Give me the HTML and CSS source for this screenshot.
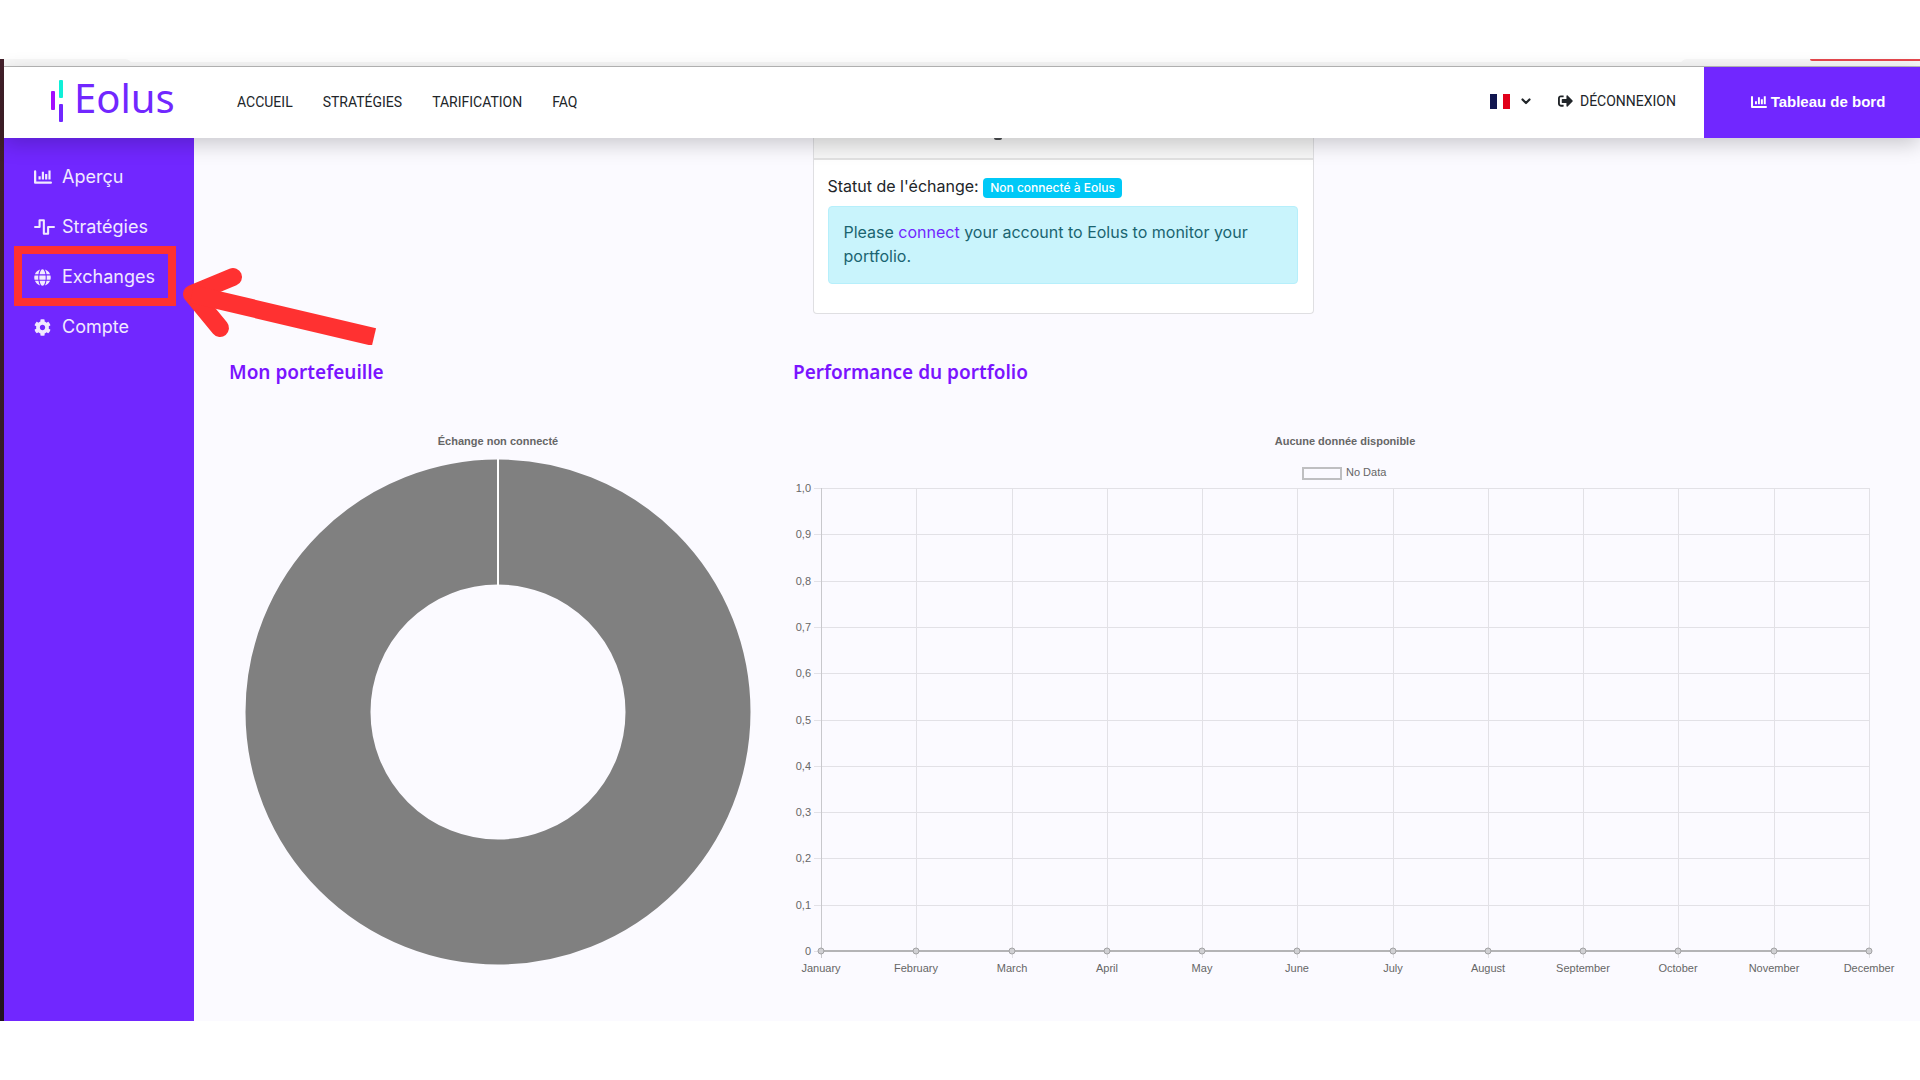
FILE: index.html
```html
<!DOCTYPE html>
<html lang="fr">
<head>
	<meta charset="utf-8">
	<meta name="viewport" content="width=device-width, initial-scale=1.0">
	<title>Eolus</title>
	<link rel="stylesheet" href="styles.css">
</head>
<body>
	<svg class="sprite" aria-hidden="true">
		<symbol id="i-chart" viewBox="0 0 512 384">
			<path d="M32 32v320h448" fill="none" stroke="currentColor" stroke-width="64" stroke-linecap="round" stroke-linejoin="round"/>
			<path d="M128 168h62v96h-62zM222 40h62v224h-62zM316 104h62v160h-62zM410 8h62v256h-62z"/>
		</symbol>
		<symbol id="i-wave" viewBox="0 0 640 480">
			<path d="M32 240h138V36h130v408h130V240h178" fill="none" stroke="currentColor" stroke-width="64" stroke-linecap="round" stroke-linejoin="round"/>
		</symbol>
		<symbol id="i-globe" viewBox="0 0 496 512">
			<path d="M336.5 160C322 70.7 287.8 8 248 8s-74 62.7-88.5 152h177zM152 256c0 22.2 1.2 43.5 3.3 64h185.3c2.1-20.5 3.3-41.8 3.3-64s-1.2-43.5-3.3-64H155.3c-2.1 20.5-3.3 41.8-3.3 64zm324.7-96c-28.6-67.9-86.5-120.4-158-141.6 24.4 33.8 41.2 84.7 50 141.6h108zM177.2 18.4C105.8 39.6 47.8 92.1 19.3 160h108c8.7-56.9 25.5-107.8 49.9-141.6zM487.4 192H372.7c2.1 21 3.3 42.5 3.3 64s-1.2 43-3.3 64h114.6c5.5-20.5 8.6-41.8 8.6-64s-3.1-43.5-8.5-64zM120 256c0-21.5 1.2-43 3.3-64H8.6C3.2 212.5 0 233.8 0 256s3.2 43.5 8.6 64h114.6c-2-21-3.2-42.5-3.2-64zm39.5 96c14.5 89.3 48.7 152 88.5 152s74-62.7 88.5-152h-177zm159.3 141.6c71.4-21.2 129.4-73.7 158-141.6h-108c-8.8 56.9-25.6 107.8-50 141.6zM19.3 352c28.6 67.9 86.5 120.4 158 141.6-24.4-33.8-41.2-84.7-50-141.6h-108z"/>
		</symbol>
		<symbol id="i-cog" viewBox="0 0 512 512">
			<path d="M487.4 315.7l-42.6-24.6c4.3-23.2 4.3-47 0-70.2l42.6-24.6c4.9-2.8 7.1-8.6 5.5-14-11.1-35.6-30-67.8-54.7-94.6-3.8-4.1-10-5.1-14.8-2.3L380.8 110c-17.9-15.4-38.5-27.3-60.8-35.1V25.8c0-5.6-3.9-10.5-9.4-11.7-36.7-8.2-74.3-7.8-109.2 0-5.5 1.2-9.4 6.1-9.4 11.7V75c-22.2 7.9-42.8 19.8-60.8 35.1L88.7 85.5c-4.9-2.8-11-1.9-14.8 2.3-24.7 26.7-43.6 58.9-54.7 94.6-1.7 5.4.6 11.2 5.5 14L67.3 221c-4.3 23.2-4.3 47 0 70.2l-42.6 24.6c-4.9 2.8-7.1 8.6-5.5 14 11.1 35.6 30 67.8 54.7 94.6 3.8 4.1 10 5.1 14.8 2.3l42.6-24.6c17.9 15.4 38.5 27.3 60.8 35.1v49.2c0 5.6 3.9 10.5 9.4 11.7 36.7 8.2 74.3 7.8 109.2 0 5.5-1.2 9.4-6.1 9.4-11.7v-49.2c22.2-7.9 42.8-19.8 60.8-35.1l42.6 24.6c4.9 2.8 11 1.9 14.8-2.3 24.7-26.7 43.6-58.9 54.7-94.6 1.5-5.5-.7-11.3-5.6-14.1zM256 336c-44.1 0-80-35.9-80-80s35.9-80 80-80 80 35.9 80 80-35.9 80-80 80z"/>
		</symbol>
		<symbol id="i-logout" viewBox="0 64 512 384">
			<path d="M497 273L329 441c-15 15-41 4.5-41-17v-96H152c-13.3 0-24-10.7-24-24v-96c0-13.3 10.7-24 24-24h136V88c0-21.4 25.9-32 41-17l168 168c9.3 9.4 9.3 24.6 0 34zM192 436v-40c0-6.6-5.4-12-12-12H96c-17.7 0-32-14.3-32-32V160c0-17.7 14.3-32 32-32h84c6.6 0 12-5.4 12-12V76c0-6.6-5.4-12-12-12H96c-53 0-96 43-96 96v192c0 53 43 96 96 96h84c6.6 0 12-5.4 12-12z"/>
		</symbol>
	</svg>

	<div class="window">
		<div class="tabs">
			<span class="tab-left"></span>
			<span class="tab-right"></span>
		</div>

		<header class="header">
			<a class="logo" href="#">
				<svg width="12" height="42" viewBox="0 0 12 42" aria-hidden="true">
					<rect x="0" y="11" width="4" height="19" rx="1" fill="#a30dff"/>
					<rect x="8" y="0" width="4" height="18" rx="1" fill="#0ff0d8"/>
					<rect x="8" y="24" width="4" height="18" rx="1" fill="#7127ff"/>
				</svg>
				<span>Eolus</span>
			</a>
			<nav class="nav">
				<a href="#">ACCUEIL</a>
				<a href="#">STRATÉGIES</a>
				<a href="#">TARIFICATION</a>
				<a href="#">FAQ</a>
			</nav>
			<button class="lang" type="button" aria-label="Français">
				<svg width="20" height="15" viewBox="0 0 20 15">
					<path fill="#fff" d="M0 0h20v15H0z"/>
					<path fill="#11164f" d="M0 0h7v15H0z"/>
					<path fill="#e1001a" d="M13 0h7v15h-7z"/>
				</svg>
				<svg width="10" height="7" viewBox="0 0 10 7">
					<path d="M1.5 1.5L5 5l3.5-3.5" fill="none" stroke="#212529" stroke-width="2.2" stroke-linecap="round" stroke-linejoin="round"/>
				</svg>
			</button>
			<a class="logout" href="#">
				<svg width="15" height="12"><use href="#i-logout"/></svg>
				<span>DÉCONNEXION</span>
			</a>
			<a class="dashboard" href="#">
				<svg width="16" height="12"><use href="#i-chart"/></svg>
				<span>Tableau de bord</span>
			</a>
		</header>

		<div class="page">
			<aside class="sidebar">
				<ul>
					<li><a href="#"><span class="icon"><svg width="18" height="14"><use href="#i-chart"/></svg></span>Aperçu</a></li>
					<li><a href="#"><span class="icon"><svg width="21" height="16"><use href="#i-wave"/></svg></span>Stratégies</a></li>
					<li class="current">
						<a href="#"><span class="icon"><svg width="17" height="17"><use href="#i-globe"/></svg></span>Exchanges</a>
						<svg class="arrow" width="200" height="84" viewBox="0 0 200 84" aria-hidden="true">
							<path d="M53 16L12 33l28 34" fill="none" stroke="#ff3131" stroke-width="18" stroke-linecap="round" stroke-linejoin="round"/>
							<path d="M12 33L194 76" fill="none" stroke="#ff3131" stroke-width="18"/>
						</svg>
					</li>
					<li><a href="#"><span class="icon"><svg width="17" height="17"><use href="#i-cog"/></svg></span>Compte</a></li>
				</ul>
			</aside>

			<main class="content">
				<section class="card">
					<div class="card-header"><span class="descender"></span></div>
					<div class="card-body">
						<p class="status">Statut de l'échange: <span class="badge">Non connecté à Eolus</span></p>
						<div class="alert">Please <a href="#">connect</a> your account to Eolus to monitor your portfolio.</div>
					</div>
				</section>

				<div class="row">
					<section class="portfolio">
						<h2>Mon portefeuille</h2>
						<svg class="chart" viewBox="0 0 540 560" role="img">
							<text class="chart-title" x="269" y="17">Échange non connecté</text>
							<circle cx="269" cy="284" r="190" fill="none" stroke="#808080" stroke-width="125"/>
							<path d="M269 31v127" stroke="#fff" stroke-width="2"/>
						</svg>
					</section>
					<section class="performance">
						<h2>Performance du portfolio</h2>
						<svg class="chart" viewBox="0 0 1104 560" role="img">
							<text class="chart-title" x="552" y="17">Aucune donnée disponible</text>
							<rect x="510" y="40" width="38" height="11" fill="none" stroke="#bfbfc1" stroke-width="2"/>
							<text class="label" x="553" y="48">No Data</text>
							<g id="plot"></g>
						</svg>
					</section>
				</div>
			</main>
		</div>
	</div>

	<script src="chart.js"></script>
</body>
</html>
```

FILE: styles.css
```css
body, ul, li, h2, p{
	margin: 0;
	padding: 0;
}
*, *::before, *::after{
	box-sizing: border-box;
}
ul{
	list-style: none;
}
a{
	color: inherit;
	text-decoration: none;
}
svg{
	display: block;
	fill: currentColor;
}
body{
	background: #fff;
	color: #212529;
	font: 16px/24px Inter, "Noto Sans", sans-serif;
	padding-top: 59px;
	overflow-x: hidden;
}
.sprite{
	position: absolute;
	width: 0;
	height: 0;
}
.window{
	position: relative;
	padding-left: 4px;
	background: linear-gradient(#43202a, #21131d);
}

/* bottom edge of the browser tabs */
.tabs{
	display: flex;
	justify-content: space-between;
	height: 8px;
	background: linear-gradient(#fff 3px, #f7f7f7 3px);
	border-bottom: 1px solid #b9b9b9;
	overflow: hidden;
}
.tab-left{
	width: 128px;
	background: #f7f7f7;
	border-top-right-radius: 8px;
}
.tab-right{
	width: 240px;
	padding-left: 130px;
	background: #f7f7f7;
	border-top-left-radius: 8px;
}
.tab-right::before{
	content: "";
	display: block;
	height: 2px;
	background: #e5484d;
	border-bottom-left-radius: 6px;
}

.header{
	position: relative;
	z-index: 3;
	display: flex;
	align-items: center;
	height: 71px;
	background: #fff;
	box-shadow: 0 6px 20px rgba(0, 0, 0, .2);
	font: 14px/24px Roboto, sans-serif;
}
.logo{
	display: flex;
	align-items: center;
	gap: 11px;
	width: 186px;
	padding-left: 47px;
	padding-bottom: 3px;
	color: #7127ff;
	font: 40px/48px "Noto Sans", sans-serif;
}
.logo svg{
	flex: none;
}
.logo span{
	padding-bottom: 6px;
}
.nav{
	display: flex;
	gap: 30px;
	margin-left: 47px;
	margin-right: auto;
	padding-bottom: 2px;
}
.lang{
	display: flex;
	align-items: center;
	gap: 11px;
	padding: 0 0 2px;
	border: 0;
	background: none;
	cursor: pointer;
}
.logout{
	display: flex;
	align-items: center;
	gap: 7px;
	margin: 0 28px 0 27px;
	padding-bottom: 3px;
}
.dashboard{
	display: flex;
	align-items: center;
	justify-content: center;
	gap: 4px;
	align-self: stretch;
	width: 216px;
	padding-left: 12px;
	padding-bottom: 2px;
	background: #7127ff;
	color: #fff;
	font: bold 15px/24px "Liberation Sans", Arial, sans-serif;
}

.page{
	display: flex;
	min-height: 883px;
}
.sidebar{
	position: relative;
	z-index: 2;
	flex: none;
	width: 190px;
	padding-top: 14px;
	background: #7127ff;
	color: #f1e9ff;
	font-size: 18px;
}
.sidebar li{
	position: relative;
}
.sidebar a{
	display: flex;
	align-items: center;
	height: 50px;
	padding-left: 30px;
}
.icon{
	flex: none;
	width: 28px;
}
.current::after{
	content: "";
	position: absolute;
	top: -6px;
	left: 10px;
	right: 18px;
	height: 60px;
	border: 8px solid #ff3131;
	pointer-events: none;
}
.arrow{
	position: absolute;
	top: 9px;
	left: 176px;
	pointer-events: none;
}

.content{
	flex: 1;
	min-width: 0;
	padding: 0 23px 32px 35px;
	background: #fbfaff;
}
.card{
	width: 501px;
	max-width: 100%;
	margin: 0 auto;
	background: #fff;
	border: 1px solid #dfdfe2;
	border-top: 0;
	border-radius: 0 0 4px 4px;
}
.card-header{
	height: 22px;
	padding-left: 180px;
	background: #f7f7f7;
	border-bottom: 2px solid #e2e2e2;
}
.descender{
	display: block;
	width: 8px;
	height: 2px;
	background: #4a4d50;
	border-radius: 0 0 4px 4px;
}
.card-body{
	padding: 14px 15px 29px 14px;
}
.status{
	padding-bottom: 8px;
}
.badge{
	display: inline-block;
	padding: 0 7px;
	border-radius: 4px;
	background: #00c9f7;
	color: #fff;
	font-size: 12px;
	font-weight: 500;
	line-height: 20px;
}
.alert{
	padding: 13px 15px;
	min-height: 78px;
	background: #c9f4fc;
	border: 1px solid #b6effb;
	border-radius: 4px;
	color: #1a6470;
}
.alert a{
	color: #7127ff;
}

.row{
	display: grid;
	grid-template-columns: 540fr 1104fr;
	gap: 24px;
	margin-top: 43px;
}
.row h2{
	margin-bottom: 41px;
	color: #7a14ff;
	font: 600 19px/30px "Noto Sans", sans-serif;
}
.chart{
	width: 100%;
	height: auto;
	overflow: visible;
	font-family: "Liberation Sans", Arial, sans-serif;
	font-size: 11px;
	fill: #666;
}
.chart-title{
	font-weight: bold;
	text-anchor: middle;
}
.month{
	text-anchor: middle;
}
.value{
	text-anchor: end;
}
```

FILE: chart.js
```js
var months = ["January", "February", "March", "April", "May", "June", "July", "August", "September", "October", "November", "December"];
var left = 28, right = 1076, top0 = 60, bottom = 523;
var html = "";
var i, x, y;

// horizontal lines and values
for(i=0; i<=10; i++){
	y = Math.round(top0 + (bottom - top0) * i / 10);
	var value = i == 10 ? "0" : ((10 - i) / 10).toFixed(1).replace(".", ",");
	html += '<path d="M' + (left - 7) + ' ' + (y + .5) + 'H' + right + '" stroke="#e2e1e6"/>';
	html += '<text class="value" x="18" y="' + (y + 4) + '">' + value + '</text>';
}

// vertical lines and months
for(i=0; i<months.length; i++){
	x = Math.round(left + (right - left) * i / 11);
	html += '<path d="M' + (x + .5) + ' ' + top0 + 'V' + (bottom + 7) + '" stroke="' + (i ? "#e2e1e6" : "#c8c8cc") + '"/>';
	html += '<text class="month" x="' + x + '" y="544">' + months[i] + '</text>';
}

// data line
html += '<path d="M' + left + ' ' + bottom + 'H' + right + '" stroke="#b4b4b6" stroke-width="2"/>';
for(i=0; i<months.length; i++){
	x = Math.round(left + (right - left) * i / 11);
	html += '<circle cx="' + x + '" cy="' + bottom + '" r="3" fill="#d0d0d3" stroke="#a2a2a4"/>';
}

document.getElementById("plot").innerHTML = html;
```
